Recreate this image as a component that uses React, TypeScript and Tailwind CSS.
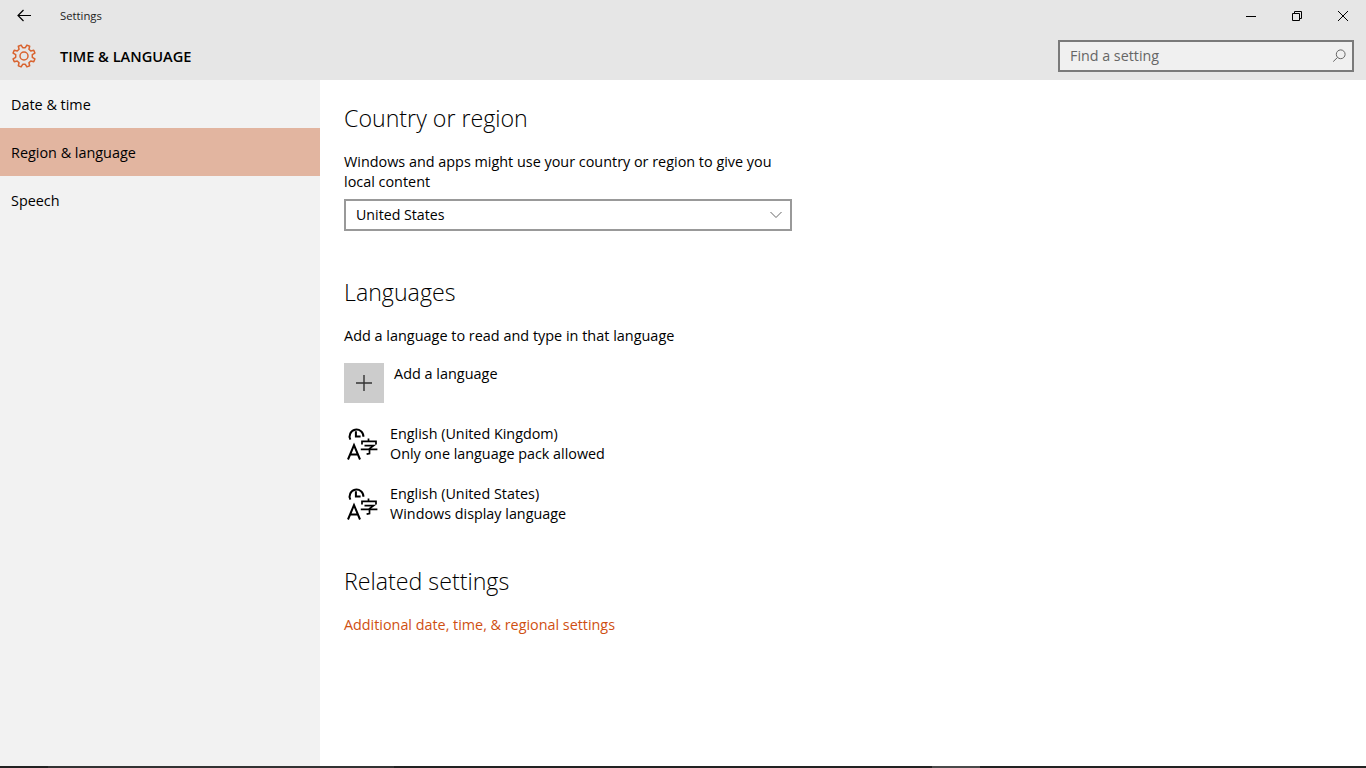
const font = "font-['Open_Sans','Noto_Sans',sans-serif]";

// 8 tooth gear outline, built once from polar points
function gearPath() {
  const pts: string[] = [];
  const teeth = 8;
  for (let i = 0; i < teeth; i++) {
    const a = (i * 2 * Math.PI) / teeth - Math.PI / 2 + Math.PI / 8;
    const step = (2 * Math.PI) / teeth;
    const list: [number, number][] = [
      [8.4, a - step * 0.3],
      [11.3, a - step * 0.17],
      [11.3, a + step * 0.17],
      [8.4, a + step * 0.3],
    ];
    list.forEach(([r, t]) => {
      pts.push(`${(12 + r * Math.cos(t)).toFixed(2)} ${(12 + r * Math.sin(t)).toFixed(2)}`);
    });
  }
  return "M" + pts.join(" L") + " Z";
}

function GearIcon() {
  return (
    <svg width="24" height="24" viewBox="0 0 24 24" fill="none" stroke="#d9632f" strokeWidth="1.5">
      <path d={gearPath()} strokeLinejoin="round" />
      <circle cx="12" cy="12" r="4" />
    </svg>
  );
}

function LangIcon() {
  return (
    <svg width="34" height="36" viewBox="0 0 34 36" fill="none" stroke="#000" strokeWidth="2" className="shrink-0">
      <path d="M6.4 13.6 A6.9 6.9 0 1 1 19.4 10.8" />
      <path d="M11.9 5.2 V10.4 H16.6" />
      <path d="M4 33.5 L10 19 L16 33.5 M6 28.6 H14" />
      <path d="M24.5 12.6 V15.3 M18 18.6 V15.3 H32 V18.6 M20.5 19.6 H29.6 L25.5 22.6 V27.6 L22.6 28.2 M16.8 23.4 H33.4" strokeWidth="1.7" />
    </svg>
  );
}

function LangRow({ name, note }: { name: string; note: string }) {
  return (
    <div className="flex h-[60px] items-start">
      <div className="w-[46px] pt-[2px]">
        <LangIcon />
      </div>
      <div className="text-[14.35px] leading-[20px] text-black">
        <div>{name}</div>
        <div>{note}</div>
      </div>
    </div>
  );
}

export default function App() {
  return (
    <div className={`flex h-[768px] w-[1366px] flex-col overflow-hidden bg-white ${font}`}>
      {/* TITLE BAR */}
      <div className="flex h-[32px] items-center bg-[#e6e6e6]">
        <div className="flex w-[60px] pl-[16px]">
          <svg width="16" height="16" viewBox="0 0 16 16" fill="none" stroke="#000" strokeWidth="1.2">
            <path d="M2 7.5 H15 M7.5 2 L2 7.5 L7.5 13" />
          </svg>
        </div>
        <span className="text-[11.3px] text-[#222]">Settings</span>
        <div className="ml-auto flex items-center gap-[30px] pr-[15px]">
          <svg width="16" height="16" viewBox="0 0 16 16" fill="none" stroke="#000" strokeWidth="1">
            <path d="M3 8.5 H13" />
          </svg>
          <svg width="16" height="16" viewBox="0 0 16 16" fill="none" stroke="#000" strokeWidth="1">
            <path d="M3.5 5.5 H10.5 V12.5 H3.5 Z M5.5 5.5 V3.5 H12.5 V10.5 H10.5" />
          </svg>
          <svg width="16" height="16" viewBox="0 0 16 16" fill="none" stroke="#000" strokeWidth="1">
            <path d="M3 3 L13 13 M13 3 L3 13" />
          </svg>
        </div>
      </div>

      {/* HEADER */}
      <div className="flex h-[48px] items-center bg-[#e6e6e6]">
        <div className="flex w-[60px] pl-[12px]">
          <GearIcon />
        </div>
        <span className="pt-[2px] text-[14.6px] font-semibold text-black">TIME &amp; LANGUAGE</span>
        <div className="ml-auto mr-[12px] flex h-[32px] w-[296px] items-center justify-between border-2 border-[#7a7a7a] bg-[#f0f0f0] pl-[10px] pr-[6px]">
          <span className="text-[14.3px] text-[#666]">Find a setting</span>
          <svg width="14" height="14" viewBox="0 0 14 14" fill="none" stroke="#666" strokeWidth="1">
            <circle cx="8.7" cy="5.3" r="4.4" />
            <path d="M5.6 8.4 L1.2 12.6" />
          </svg>
        </div>
      </div>

      <div className="flex min-h-0 flex-1">
        {/* SIDEBAR */}
        <div className="w-[320px] bg-[#f2f2f2] text-[14.4px] text-black">
          <div className="flex h-[48px] items-center pl-[11px] pt-[2px]">Date &amp; time</div>
          <div className="flex h-[48px] items-center bg-[#e2b5a0] pl-[11px] pt-[2px]">Region &amp; language</div>
          <div className="flex h-[48px] items-center pl-[11px] pt-[2px]">Speech</div>
        </div>

        {/* CONTENT */}
        <div className="flex-1 pl-[24px] pt-[20px] text-black">
          <h2 className="text-[23.2px] font-light leading-[36px]">Country or region</h2>
          <p className="mt-[16px] w-[450px] text-[14.4px] leading-[20px]">
            Windows and apps might use your country or region to give you local content
          </p>
          <div className="mt-[7px] flex h-[32px] w-[448px] items-center justify-between border-2 border-[#999] pl-[10px] pr-[8px] text-[14.2px]">
            <span>United States</span>
            <svg width="12" height="8" viewBox="0 0 12 8" fill="none" stroke="#666" strokeWidth="1">
              <path d="M0.5 1 L6 6.5 L11.5 1" />
            </svg>
          </div>

          <h2 className="mt-[43px] text-[23.2px] font-light leading-[36px]">Languages</h2>
          <p className="mt-[16px] text-[14.45px] leading-[20px]">Add a language to read and type in that language</p>
          <div className="mt-[17px] flex h-[40px] items-start">
            <div className="flex h-[40px] w-[40px] items-center justify-center bg-[#cccccc]">
              <svg width="16" height="16" viewBox="0 0 16 16" fill="none" stroke="#333" strokeWidth="1.4">
                <path d="M8 0 V16 M0 8 H16" />
              </svg>
            </div>
            <span className="ml-[10px] mt-[1px] text-[14.45px] leading-[20px]">Add a language</span>
          </div>

          <div className="mt-[21px]">
            <LangRow name="English (United Kingdom)" note="Only one language pack allowed" />
            <LangRow name="English (United States)" note="Windows display language" />
          </div>

          <h2 className="mt-[19px] text-[23.2px] font-light leading-[36px]">Related settings</h2>
          <p className="mt-[16px] text-[14.35px] leading-[20px] text-[#cf4f12]">Additional date, time, &amp; regional settings</p>
        </div>
      </div>

      {/* TASKBAR EDGE */}
      <div className="flex h-[2px] bg-[#222]">
        <div className="ml-[48px] h-full w-[346px] bg-[#333]" />
        <div className="ml-[538px] h-full w-[48px] bg-[#4a4a4a]" />
      </div>
    </div>
  );
}
